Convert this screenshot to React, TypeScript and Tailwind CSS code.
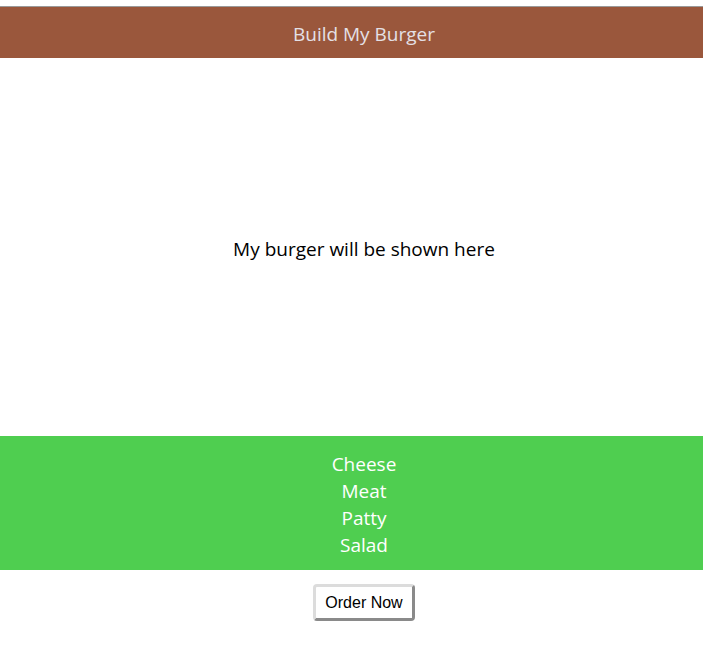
export default function App() {
  return (
    <div className="overflow-hidden bg-white">
      <div className="w-[728px] pt-[6px]" style={{ fontFamily: '"Open Sans", sans-serif' }}>
        <div className="border-t border-[#9a9a9a] bg-[#9a573c] h-[52px] flex items-center justify-center">
          <span className="pt-[4px] text-[19px] text-[#e4e0e6]">Build My Burger</span>
        </div>
        <div className="h-[378px] flex items-center justify-center">
          <span className="pt-[4px] text-[19px] text-black">My burger will be shown here</span>
        </div>
        <div className="bg-[#4fce50] pt-[15px] pb-[11px] flex flex-col items-center text-[19px] leading-[27px] text-white">
          <div>Cheese</div>
          <div>Meat</div>
          <div>Patty</div>
          <div>Salad</div>
        </div>
        <div className="flex justify-center pt-[14px]">
          <button
            className="h-[37px] px-[9px] rounded-[4px] border-[3px] border-t-[#dcdcdc] border-l-[#dcdcdc] border-b-[#8a8a8a] border-r-[#8a8a8a] bg-white text-[16px] text-black"
            style={{ fontFamily: '"Liberation Sans", Arial, sans-serif' }}
          >
            Order Now
          </button>
        </div>
      </div>
    </div>
  );
}
